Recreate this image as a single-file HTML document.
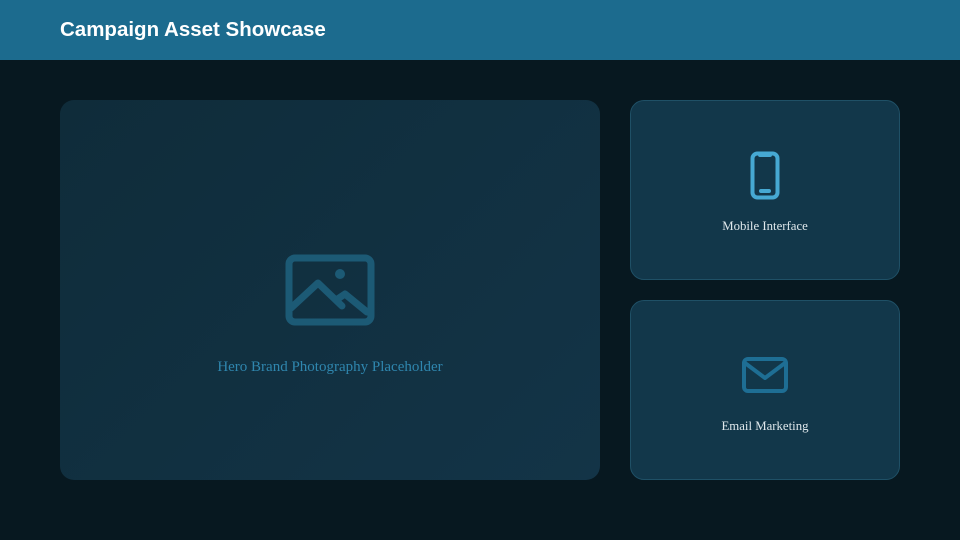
<!DOCTYPE html>
<html><head><meta charset="utf-8"><style>
*{margin:0;padding:0;box-sizing:border-box}
body{width:960px;height:540px;background:#071820;position:relative;overflow:hidden;font-family:"Liberation Serif",serif}
.hdr{position:absolute;left:0;top:0;width:960px;height:60px;background:#1c6b8e}
.hdr h1{position:absolute;left:60px;top:18px;font:bold 20.5px "Liberation Sans",sans-serif;color:#fff;white-space:nowrap}
.hero{position:absolute;left:60px;top:100px;width:540px;height:380px;border-radius:14px;background:linear-gradient(135deg,#0f2c3a,#133447)}
.card{position:absolute;left:630px;width:270px;height:180px;border-radius:14px;background:#12374a;border:1px solid #1f5066}
.lbl{position:absolute;width:100%;text-align:center;font-size:12.8px;color:#dfe8ec;white-space:nowrap}
</style></head><body>
<div class="hdr"><h1>Campaign Asset Showcase</h1></div>
<div class="hero">
<svg style="position:absolute;left:225px;top:154px" width="90" height="72" viewBox="0 0 90 72" fill="none" stroke="#1c5a75" stroke-width="7" stroke-linecap="round" stroke-linejoin="round">
<rect x="4" y="4" width="82" height="64" rx="6"/>
<path d="M6 54 L33 29 L57 52 M51 46 L60 40 L82 58"/>
<circle cx="55" cy="20" r="5" fill="#1c5a75" stroke="none"/>
</svg>
<div class="lbl" style="top:259px;font-size:15px;color:#2f86ae">Hero Brand Photography Placeholder</div>
</div>
<div class="card" style="top:100px">
<svg style="position:absolute;left:119px;top:50px" width="30" height="49" viewBox="0 0 30 49" fill="none" stroke="#46a9d3" stroke-width="4" stroke-linecap="round">
<rect x="2.5" y="2.5" width="25" height="44" rx="5"/>
<path d="M10 4 H20 M11 40 H19"/>
</svg>
<div class="lbl" style="top:118px">Mobile Interface</div>
</div>
<div class="card" style="top:300px">
<svg style="position:absolute;left:111px;top:55px" width="46" height="38" viewBox="0 0 46 38" fill="none" stroke="#1e6e94" stroke-width="4" stroke-linecap="round" stroke-linejoin="round">
<rect x="2" y="3" width="42" height="32" rx="4"/>
<path d="M3 7 L23 22 L43 7"/>
</svg>
<div class="lbl" style="top:118px">Email Marketing</div>
</div>
</body></html>
